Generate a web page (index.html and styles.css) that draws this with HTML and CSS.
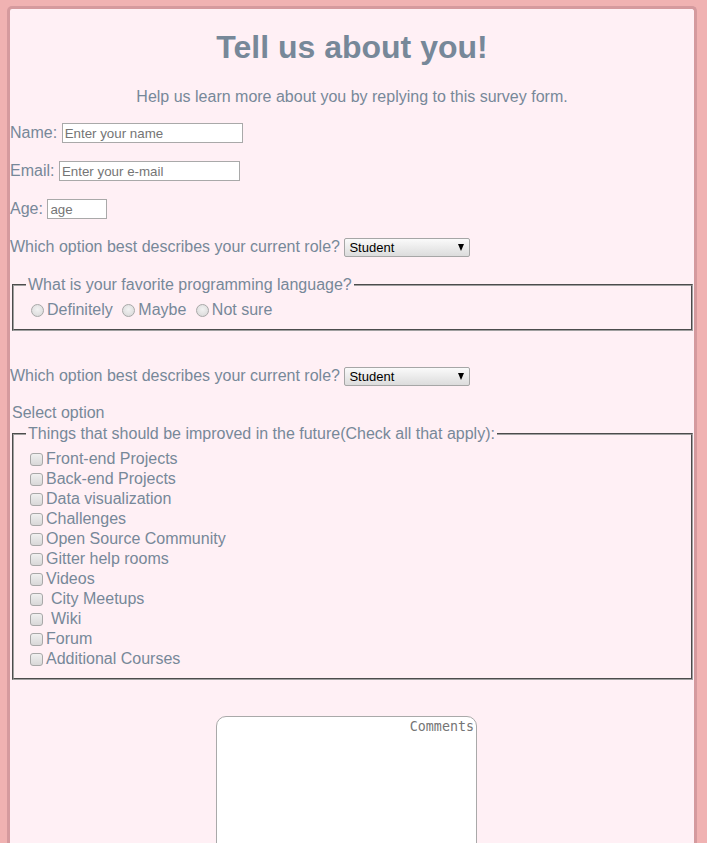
FILE: index.html
```html
<!DOCTYPE html>
<html lang="en">
<head>
<meta charset="utf-8">
<title>Survey Form</title>
<link rel="stylesheet" href="styles.css">
</head>
<body>
<main class="card">
  <h1 class="title">Tell us about you!</h1>
  <p class="subtitle">Help us learn more about you by replying to this survey form.</p>
  <form class="form">
    <div class="row">
      <label for="name">Name:</label>
      <input class="field field-name" id="name" type="text" placeholder="Enter your name">
    </div>
    <div class="row">
      <label for="email">Email:</label>
      <input class="field field-email" id="email" type="email" placeholder="Enter your e-mail">
    </div>
    <div class="row">
      <label for="age">Age:</label>
      <input class="field field-age" id="age" type="text" placeholder="age">
    </div>
    <div class="row">
      <label for="role1">Which option best describes your current role?</label>
      <span class="select-wrap"><select class="select" id="role1"><option>Student</option><option>Full-time job</option><option>Prefer not to say</option></select></span>
    </div>
    <fieldset class="group group-radio">
      <legend class="legend">What is your favorite programming language?</legend>
      <div class="radios">
        <label class="radio-item"><input class="radio" type="radio" name="lang">Definitely</label>
        <label class="radio-item"><input class="radio" type="radio" name="lang">Maybe</label>
        <label class="radio-item"><input class="radio" type="radio" name="lang">Not sure</label>
      </div>
    </fieldset>
    <div class="row row-second">
      <label for="role2">Which option best describes your current role?</label>
      <span class="select-wrap"><select class="select" id="role2"><option>Student</option><option>Full-time job</option><option>Prefer not to say</option></select></span>
    </div>
    <div class="select-note">Select option</div>
    <fieldset class="group group-check">
      <legend class="legend">Things that should be improved in the future(Check all that apply):</legend>
      <label class="check-item"><input class="check" type="checkbox">Front-end Projects</label>
      <label class="check-item"><input class="check" type="checkbox">Back-end Projects</label>
      <label class="check-item"><input class="check" type="checkbox">Data visualization</label>
      <label class="check-item"><input class="check" type="checkbox">Challenges</label>
      <label class="check-item"><input class="check" type="checkbox">Open Source Community</label>
      <label class="check-item"><input class="check" type="checkbox">Gitter help rooms</label>
      <label class="check-item"><input class="check" type="checkbox">Videos</label>
      <label class="check-item"><input class="check" type="checkbox"><span class="pad">City Meetups</span></label>
      <label class="check-item"><input class="check" type="checkbox"><span class="pad">Wiki</span></label>
      <label class="check-item"><input class="check" type="checkbox">Forum</label>
      <label class="check-item"><input class="check" type="checkbox">Additional Courses</label>
    </fieldset>
    <div class="comments-wrap">
      <textarea class="comments" placeholder="Comments"></textarea>
    </div>
  </form>
</main>
</body>
</html>
```

FILE: styles.css
```css
html, body {
  margin: 0;
  padding: 0;
}
body {
  background: #f0b2b2;
  padding: 6px 10px 0 7px;
  font-family: "Liberation Sans", Arial, sans-serif;
  font-size: 16px;
  color: #778899;
  overflow: hidden;
  height: 843px;
  box-sizing: border-box;
}
.card {
  background: #fff0f5;
  border: 3px solid #d59a9e;
  border-bottom: none;
  border-radius: 5px 5px 0 0;
  min-height: 900px;
  display: flow-root;
}
.title {
  margin: 20px 0 22px;
  font-size: 32px;
  line-height: 37px;
  font-weight: bold;
  text-align: center;
}
.subtitle {
  margin: 0;
  line-height: 18px;
  text-align: center;
}
.form {
  display: block;
}
.row {
  display: flex;
  align-items: center;
  gap: 4.5px;
  height: 22px;
  margin: 16px 0;
  line-height: 18px;
}
.field {
  box-sizing: border-box;
  height: 20px;
  border: 1px solid #a9a9a9;
  padding: 1px 2px;
  background: #fff;
  font-family: "Liberation Sans", Arial, sans-serif;
  font-size: 13.33px;
  color: #000;
  margin: 0;
  outline: none;
}
.field::placeholder {
  color: #757575;
}
.field-name { width: 181px; }
.field-email { width: 181px; }
.field-age { width: 60px; }
.select-wrap {
  position: relative;
  display: inline-block;
  height: 19px;
  margin-top: 1px;
}
.select {
  appearance: none;
  -webkit-appearance: none;
  box-sizing: border-box;
  width: 126px;
  height: 19px;
  margin: 0;
  padding: 0 0 0 4px;
  border: 1px solid #a6a6a6;
  border-radius: 2px;
  background: linear-gradient(#fafafa, #dcdcdc);
  font-family: "Liberation Sans", Arial, sans-serif;
  font-size: 13px;
  color: #000;
  outline: none;
}
.select-wrap::after {
  content: "";
  position: absolute;
  right: 6px;
  top: 6px;
  border-left: 3.5px solid transparent;
  border-right: 3.5px solid transparent;
  border-top: 7px solid #000;
  pointer-events: none;
}
.group {
  margin: 18px 1px 0 2px;
  padding: 6.6px 12px 9px;
  border: 2px groove #a0a0a0;
}
.legend {
  padding: 0 2px;
  line-height: 18px;
}
.radios {
  display: flex;
  align-items: center;
  height: 19px;
  line-height: 18px;
}
.radio-item {
  display: inline-flex;
  align-items: center;
  margin-right: 4.5px;
}
.radio {
  appearance: none;
  -webkit-appearance: none;
  box-sizing: border-box;
  width: 13px;
  height: 13px;
  margin: 0 3px 0 5px;
  border: 1px solid #a8a8a8;
  border-radius: 50%;
  background: radial-gradient(circle at 50% 40%, #f2f2f2, #d6d6d6);
}
.row-second {
  margin-top: 34px;
}
.select-note {
  margin: 17px 0 0 2px;
  line-height: 18px;
}
.group-check {
  margin-top: 3px;
}
.check-item {
  display: flex;
  align-items: center;
  height: 20px;
  line-height: 18px;
}
.check {
  appearance: none;
  -webkit-appearance: none;
  box-sizing: border-box;
  width: 13px;
  height: 13px;
  margin: 0 3px 0 4px;
  border: 1px solid #a8a8a8;
  border-radius: 3px;
  background: linear-gradient(#f0f0f0, #d8d8d8);
}
.pad {
  padding-left: 5px;
}
.comments-wrap {
  margin-top: 36px;
  padding-left: 206px;
}
.comments {
  display: block;
  box-sizing: border-box;
  width: 261px;
  height: 170px;
  margin: 0;
  padding: 2px 2px;
  border: 1px solid #a9a9a9;
  border-radius: 10px;
  background: #fff;
  font-family: "DejaVu Sans Mono", monospace;
  font-size: 13.33px;
  text-align: right;
  resize: none;
  outline: none;
}
.comments::placeholder {
  color: #757575;
}
```
